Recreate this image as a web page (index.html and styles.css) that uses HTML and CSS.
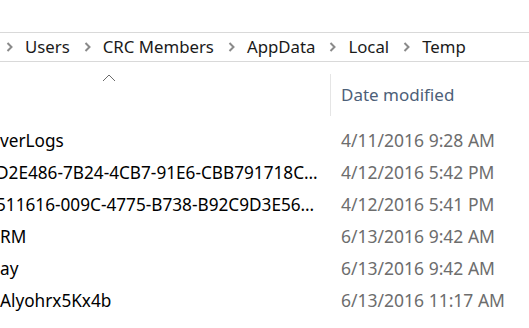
FILE: index.html
```html
<!DOCTYPE html>
<html>
<head>
<meta charset="utf-8">
<link rel="stylesheet" href="styles.css">
</head>
<body>
<div class="window">
  <div class="topspace"></div>
  <nav class="crumbs">
    <span class="chev"><svg width="7" height="10" viewBox="0 0 7 10"><polyline points="1.5,1 5.5,5 1.5,9" fill="none" stroke="#8a8a8a" stroke-width="2"/></svg></span>
    <span class="crumb">Users</span>
    <span class="chev"><svg width="7" height="10" viewBox="0 0 7 10"><polyline points="1.5,1 5.5,5 1.5,9" fill="none" stroke="#8a8a8a" stroke-width="2"/></svg></span>
    <span class="crumb">CRC Members</span>
    <span class="chev"><svg width="7" height="10" viewBox="0 0 7 10"><polyline points="1.5,1 5.5,5 1.5,9" fill="none" stroke="#8a8a8a" stroke-width="2"/></svg></span>
    <span class="crumb">AppData</span>
    <span class="chev"><svg width="7" height="10" viewBox="0 0 7 10"><polyline points="1.5,1 5.5,5 1.5,9" fill="none" stroke="#8a8a8a" stroke-width="2"/></svg></span>
    <span class="crumb">Local</span>
    <span class="chev"><svg width="7" height="10" viewBox="0 0 7 10"><polyline points="1.5,1 5.5,5 1.5,9" fill="none" stroke="#8a8a8a" stroke-width="2"/></svg></span>
    <span class="crumb">Temp</span>
  </nav>
  <div class="header">
    <div class="col-name">
      <svg class="sort" width="14" height="8" viewBox="0 0 14 8"><polyline points="1,7 7,1 13,7" fill="none" stroke="#6a6a6a" stroke-width="1"/></svg>
    </div>
    <div class="col-date">Date modified</div>
  </div>
  <div class="rows">
    <div class="row"><div class="name">verLogs</div><div class="date">4/11/2016 9:28 AM</div></div>
    <div class="row"><div class="name shift">D2E486-7B24-4CB7-91E6-CBB791718C…</div><div class="date">4/12/2016 5:42 PM</div></div>
    <div class="row"><div class="name shift">511616-009C-4775-B738-B92C9D3E56…</div><div class="date">4/12/2016 5:41 PM</div></div>
    <div class="row"><div class="name">RM</div><div class="date">6/13/2016 9:42 AM</div></div>
    <div class="row"><div class="name">ay</div><div class="date">6/13/2016 9:42 AM</div></div>
    <div class="row"><div class="name">Alyohrx5Kx4b</div><div class="date">6/13/2016 11:17 AM</div></div>
  </div>
</div>
</body>
</html>
```
FILE: styles.css
```css
html, body {
  margin: 0;
  padding: 0;
  background: #ffffff;
}
.window {
  width: 529px;
  height: 328px;
  overflow: hidden;
  font-family: "Noto Sans", "Open Sans", sans-serif;
}
.topspace {
  height: 32px;
}
.crumbs {
  border-top: 1px solid #d9d9d9;
  border-bottom: 1px solid #d9d9d9;
  display: flex;
  align-items: center;
  padding-left: 6px;
  padding-bottom: 1px;
  box-sizing: content-box;
  height: 27px;
  font-size: 16.8px;
  color: #1a1a1a;
}
.chev {
  display: flex;
  align-items: center;
  margin-right: 12px;
}
.crumb {
  margin-right: 14px;
}
.header {
  height: 62px;
  display: flex;
}
.col-name {
  width: 330px;
  flex: none;
  position: relative;
  border-right: 1px solid #e5e5e5;
  margin: 12px 0 8px;
}
.sort {
  position: absolute;
  left: 102px;
  top: 0;
}
.col-date {
  padding-left: 10px;
  padding-top: 21px;
  font-size: 17px;
  color: #4d6078;
}
.rows {
  display: flex;
  flex-direction: column;
}
.row {
  height: 32px;
  display: flex;
  align-items: center;
  font-size: 17.5px;
}
.name {
  width: 331px;
  flex: none;
  font-size: 17.2px;
  color: #000000;
  white-space: nowrap;
  overflow: hidden;
}
.shift {
  margin-left: -4px;
  width: 335px;
}
.date {
  padding-left: 10px;
  color: #6d6d6d;
  white-space: nowrap;
}
```
